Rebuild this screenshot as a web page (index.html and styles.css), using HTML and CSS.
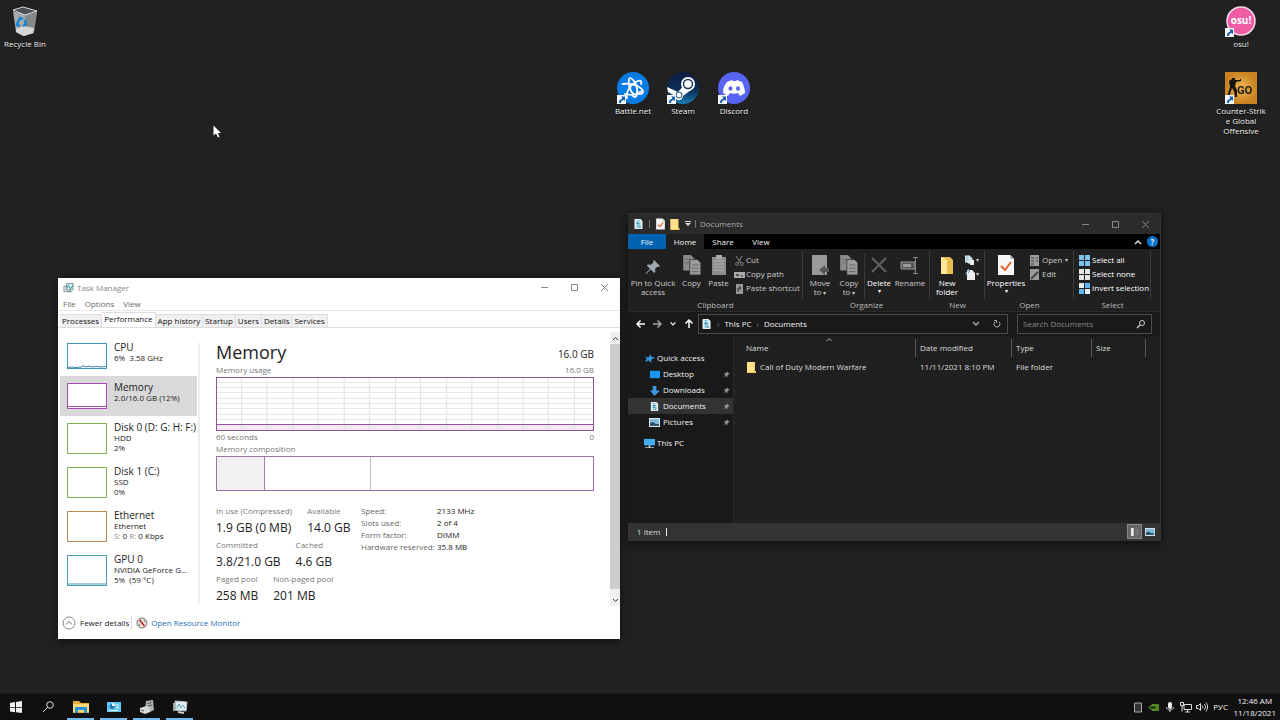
FILE: index.html
```html
<!DOCTYPE html>
<html lang="en">
<head>
<meta charset="utf-8">
<title>Desktop</title>
<link rel="stylesheet" href="styles.css">
</head>
<body>
<svg class="defs" aria-hidden="true">
  <symbol id="shortcut" viewBox="0 0 9 9"><rect width="9" height="9" fill="#f4f7fb"/><path d="M2 8C2 5 3 4 5 4V2h3v4L7 5C5 5 4 6 4 8z" fill="#1b5fb0"/><path d="M4 1.500h3.800v3.800z" fill="#1b5fb0"/></symbol>
  <symbol id="doc" viewBox="0 0 10 12"><path d="M1 1h6l2 2v8H1z" fill="#e8f1f5"/><path d="M3 3h3M3 5h4M3 7h4M3 9h3" stroke="#2e9bc4"/><path d="M3 5h2v1H3zM6 8h1v2H6z" fill="#1c6e91"/></symbol>
  <symbol id="folder" viewBox="0 0 10 12"><path d="M0 1h8v9h1v2H0z" fill="#f5cf60"/><path d="M0 1h7v10H0z" fill="#ffe28a"/></symbol>
  <symbol id="pin" viewBox="0 0 16 16"><path d="M9 1l6 6-1 1-1.500-.5L10 10l.3 3-1 1-3.600-3.600L1 15l-.5-.5L5 9.700 1.800 6.500l1-1 3.200.3 2.600-2.600L8 2z"/></symbol>
  <symbol id="tick" viewBox="0 0 18 22"><path d="M1 1h12l4 4v16H1z" fill="#f7f7f7"/><path d="M13 1v4h4z" fill="#bbb"/><path d="M4 12l4 4 6-8" fill="none" stroke="#e2622b" stroke-width="2"/></symbol>
  <symbol id="picture" viewBox="0 0 11 9"><rect width="11" height="9" fill="#dfe9ef"/><rect x="1" y="1" width="9" height="7" fill="#83bbdc"/><path d="M1 5l3-1 3 2h3v2H1z" fill="#2c5468"/></symbol>
  <symbol id="sheets" viewBox="0 0 18 20"><path d="M1 1h7l3 3v11H1z" fill="#8a8a8a"/><path d="M7 5h7l3 3v11H7z" fill="#9c9c9c" stroke="#333" stroke-width=".7"/><path d="M3 5h4M3 8h3M9 10h6M9 13h6M9 16h6" stroke="#6b6b6b"/></symbol>
  <symbol id="grid" viewBox="0 0 11 11"><path d="M0 0h5v5H0zM6 0h5v5H6zM0 6h5v5H0zM6 6h5v5H6z"/></symbol>
</svg>

<main class="desktop">
  <a class="shortcut bin" href="#"><svg class="art" viewBox="0 0 32 32"><path d="M4 6l12 4 12-3-4 21-10 3-7-4z" fill="#a9acad"/><path d="M16 10l12-3-3 21-10 3z" fill="#85898b"/><path d="M4 5l10-3 14 4-12 4z" fill="#4b5052" stroke="#d7dadb"/><path d="M7 24l8-3 10 2-1 5-9 3-8-4z" fill="#d4d6d7"/><g fill="none" stroke="#1782d2" stroke-width="2.500"><path d="M9 17l2-4 3 1M16 15l1 4-3 2M11 21l-3-1 1-3"/></g></svg><span>Recycle Bin</span></a>
  <a class="shortcut battle" href="#"><svg class="art" viewBox="0 0 32 32"><circle cx="16" cy="16" r="16" fill="#087ce5"/><g fill="none" stroke="#fff" stroke-width="1.800" stroke-linecap="round"><path d="M5.500 12C12 10.500 22 13 25.500 18c1.500 3-1 4.500-4 4"/><path d="M13 6c4 1 8.500 9 7 16-.7 3.500-2.500 4-4.500 1.500"/><path d="M10 26C8 20 15 11 21 9c3-1 4 1 3 3"/><path d="M12 7c-1.500 5 1 12 5 16"/><path d="M8 22c5 1.500 12 .5 17-3"/></g></svg><svg class="arrow"><use href="#shortcut"/></svg><span>Battle.net</span></a>
  <a class="shortcut steam" href="#"><svg class="art" viewBox="0 0 32 32"><defs><linearGradient id="sg" x2="0" y2="1"><stop stop-color="#101b40"/><stop offset=".6" stop-color="#0c315e"/><stop offset="1" stop-color="#1680b4"/></linearGradient></defs><circle cx="16" cy="16" r="16" fill="url(#sg)"/><path d="M0 15l11 5 7-8 6 6-8 6c-1 6-8 5-8 0L1 20z" fill="#fff"/><circle cx="21" cy="12" r="7" fill="#fff"/><circle cx="21" cy="12" r="4.500" fill="#fff" stroke="#18345f" stroke-width="1.500"/><circle cx="12" cy="23" r="3" fill="none" stroke="#18507d"/></svg><svg class="arrow"><use href="#shortcut"/></svg><span>Steam</span></a>
  <a class="shortcut discord" href="#"><svg class="art" viewBox="0 0 32 32"><circle cx="16" cy="16" r="16" fill="#5865f2"/><path d="M9 10l5-2 1 1h3l1-1 5 2c2 4 3 8 3 11l-5 3-2-3c-3 1-5 1-8 0l-2 3-5-3c0-4 1-8 4-11z" fill="#fff"/><ellipse cx="12.500" cy="16.500" rx="2" ry="2.300" fill="#5865f2"/><ellipse cx="20" cy="16.500" rx="2" ry="2.300" fill="#5865f2"/></svg><svg class="arrow"><use href="#shortcut"/></svg><span>Discord</span></a>
  <a class="shortcut osu" href="#"><svg class="art" viewBox="0 0 32 32"><circle cx="16" cy="16" r="14" fill="#ef5da5" stroke="#f6dbe9" stroke-width="1.500"/><text x="16" y="19" text-anchor="middle" class="osu-word">osu!</text></svg><svg class="arrow"><use href="#shortcut"/></svg><span>osu!</span></a>
  <a class="shortcut csgo" href="#"><svg class="art" viewBox="0 0 32 32"><defs><radialGradient id="cg"><stop stop-color="#efb653"/><stop offset="1" stop-color="#c88320"/></radialGradient></defs><rect width="32" height="32" fill="url(#cg)"/><path d="M7 6h3v2h5V7h1v2l-5 1-1 4 2 4v7h-2l-1-6-2-3-3 9H2l3-10-1-6 3-2z" fill="#17150e"/><text x="12" y="22" class="go-word">GO</text></svg><svg class="arrow"><use href="#shortcut"/></svg><span>Counter-Strik<br>e Global<br>Offensive</span></a>

  <section class="window task" aria-label="Task Manager">
    <header class="titlebar">
      <svg class="app" viewBox="0 0 12 12"><path d="M1 4h7v6H1z" fill="#d9e1e3" stroke="#88979c"/><path d="M4 1h7v7H4z" fill="#d8f0f4" stroke="#698b98"/><path d="M4 6l2-3 2 4 3-4" fill="none" stroke="#258c91"/><path d="M5 10h5" stroke="#849092"/></svg>
      <span class="caption">Task Manager</span>
      <div class="controls"><button aria-label="Minimize"><svg viewBox="0 0 9 9"><path d="M1 4.500h7"/></svg></button><button aria-label="Maximize"><svg viewBox="0 0 9 9"><path d="M1.500 1.500h6v6h-6z"/></svg></button><button aria-label="Close"><svg viewBox="0 0 9 9"><path d="M1 1l7 7M8 1L1 8"/></svg></button></div>
    </header>
    <nav class="menu"><button>File</button><button>Options</button><button>View</button></nav>
    <nav class="tabs"><button>Processes</button><button class="current">Performance</button><button>App history</button><button>Startup</button><button>Users</button><button>Details</button><button>Services</button></nav>
    <div class="monitor">
      <aside class="devices">
        <button class="device first"><svg class="spark" viewBox="0 0 40 26"><rect x=".5" y=".5" width="39" height="25" fill="#fff" stroke="#3f93b5"/><path d="M1 24.500l4-.5 4 .5 6-.5 1-1.500 2 1.500 4-.8 3 .8 4-.5 5 .5 5-.5" fill="none" stroke="#3b89ac"/></svg><span><b>CPU</b><i>6%&nbsp; 3.58 GHz</i></span></button>
        <button class="device short active"><svg class="spark" viewBox="0 0 40 26"><rect x=".5" y=".5" width="39" height="25" fill="#fff" stroke="#a24fb0"/><path d="M1 23.500h38" stroke="#a24fb0"/></svg><span><b>Memory</b><i>2.0/16.0 GB (12%)</i></span></button>
        <button class="device"><svg class="spark tall" viewBox="0 0 40 31"><rect x=".5" y=".5" width="39" height="30" fill="#fff" stroke="#7eb456"/></svg><span><b>Disk 0 (D: G: H: F:)</b><i>HDD</i><i>2%</i></span></button>
        <button class="device"><svg class="spark tall" viewBox="0 0 40 31"><rect x=".5" y=".5" width="39" height="30" fill="#fff" stroke="#7eb456"/></svg><span><b>Disk 1 (C:)</b><i>SSD</i><i>0%</i></span></button>
        <button class="device"><svg class="spark tall" viewBox="0 0 40 31"><rect x=".5" y=".5" width="39" height="30" fill="#fff" stroke="#b98a55"/></svg><span><b>Ethernet</b><i>Ethernet</i><i><em>S:</em> 0 <em>R:</em> 0 Kbps</i></span></button>
        <button class="device"><svg class="spark tall" viewBox="0 0 40 31"><rect x=".5" y=".5" width="39" height="30" fill="#fff" stroke="#4e9dba"/><path d="M1 29h38" stroke="#4e9dba"/></svg><span><b>GPU 0</b><i>NVIDIA GeForce G...</i><i>5%&nbsp; (59 °C)</i></span></button>
      </aside>
      <div class="details">
        <div class="heading"><h1>Memory</h1><span>16.0 GB</span></div>
        <div class="pair"><span>Memory usage</span><span>16.0 GB</span></div>
        <svg class="graph" viewBox="0 0 376 54" preserveAspectRatio="none"><rect x="1" y="47" width="374" height="6" fill="#f5e9f7"/><path d="M25.500 1v52M50.500 1v52M76.500 1v52M101.500 1v52M127.500 1v52M152.500 1v52M178.500 1v52M203.500 1v52M229.500 1v52M254.500 1v52M280.500 1v52M305.500 1v52M330.500 1v52M356.500 1v52" stroke="#e0dee2"/><path d="M1 5.500h374M1 10.500h374M1 15.500h374M1 21.500h374M1 26.500h374M1 31.500h374M1 37.500h374M1 42.500h374" stroke="#e8e6ea"/><path d="M.5.5h375v53H.5zM1 47.500h374" fill="none" stroke="#8f5696"/></svg>
        <div class="pair scale"><span>60 seconds</span><span>0</span></div>
        <div class="label">Memory composition</div>
        <div class="composition"><div class="used"></div><div class="standby"></div><div class="free"></div></div>
        <div class="numbers">
          <div class="stats">
            <dl><div><dt>In use (Compressed)</dt><dd>1.9 GB (0 MB)</dd></div><div><dt>Available</dt><dd>14.0 GB</dd></div></dl>
            <dl><div><dt>Committed</dt><dd>3.8/21.0 GB</dd></div><div><dt>Cached</dt><dd>4.6 GB</dd></div></dl>
            <dl><div><dt>Paged pool</dt><dd>258 MB</dd></div><div><dt>Non-paged pool</dt><dd>201 MB</dd></div></dl>
          </div>
          <dl class="hardware"><dt>Speed:</dt><dd>2133 MHz</dd><dt>Slots used:</dt><dd>2 of 4</dd><dt>Form factor:</dt><dd>DIMM</dd><dt>Hardware reserved:</dt><dd>35.8 MB</dd></dl>
        </div>
      </div>
      <div class="scroll"><button aria-label="Scroll up"><svg viewBox="0 0 7 5"><path d="M1 4l2.500-2.500L6 4"/></svg></button><div class="thumb"></div><button aria-label="Scroll down"><svg viewBox="0 0 7 5"><path d="M1 1l2.500 2.500L6 1"/></svg></button></div>
    </div>
    <footer class="links"><button><svg viewBox="0 0 14 14"><circle cx="7" cy="7" r="6" fill="none" stroke="#888"/><path d="M4 8.500l3-3 3 3" fill="none" stroke="#666"/></svg>Fewer details</button><a href="#"><svg viewBox="0 0 14 14"><circle cx="7" cy="7" r="5" fill="#e5e2dc" stroke="#77706b"/><path d="M4.500 4l5 6" stroke="#b32020" stroke-width="1.500"/><path d="M4 8l1 2M9 4l1 2" stroke="#777"/></svg>Open Resource Monitor</a></footer>
  </section>

  <section class="window explorer" aria-label="Documents">
    <header class="titlebar">
      <svg class="app"><use href="#doc"/></svg><span class="bar"></span><svg class="app"><use href="#tick"/></svg><svg class="app"><use href="#folder"/></svg><svg class="drop" viewBox="0 0 6 6"><path d="M0 .5h6" stroke="#ddd"/><path d="M0 2h6L3 5z" fill="#ddd"/></svg><span class="bar"></span>
      <span class="caption">Documents</span>
      <div class="controls"><button aria-label="Minimize"><svg viewBox="0 0 9 9"><path d="M1 4.500h7"/></svg></button><button aria-label="Maximize"><svg viewBox="0 0 9 9"><path d="M1.500 1.500h6v6h-6z"/></svg></button><button aria-label="Close"><svg viewBox="0 0 9 9"><path d="M1 1l7 7M8 1L1 8"/></svg></button></div>
    </header>
    <nav class="ribbon-tabs"><button class="file">File</button><button class="current">Home</button><button>Share</button><button>View</button><span class="grow"></span><button class="mini" aria-label="Collapse ribbon"><svg viewBox="0 0 8 8"><path d="M1 6l3-3 3 3" fill="none" stroke="#ddd" stroke-width="1.500"/></svg></button><button class="mini help" aria-label="Help">?</button></nav>
    <div class="ribbon">
      <div class="group clipboard"><div class="tools">
        <button class="big wide"><svg class="pin-large" fill="#9aa9b3"><use href="#pin"/></svg>Pin to Quick<br>access</button>
        <button class="big"><svg><use href="#sheets"/></svg>Copy</button>
        <button class="big"><svg viewBox="0 0 18 22"><rect x="2" y="3" width="14" height="18" fill="#8d8d8d"/><path d="M6 1h6v4H6z" fill="#aaa"/><path d="M4 7h10M4 10h10M4 13h10M4 16h10" stroke="#b3b3b3"/></svg>Paste</button>
        <div class="lines"><button><svg viewBox="0 0 11 11"><path d="M2 1l5 7M8 1L4 8" stroke="#888"/><circle cx="3" cy="9" r="1.500" fill="none" stroke="#777"/><circle cx="8" cy="9" r="1.500" fill="none" stroke="#777"/></svg>Cut</button><button><svg viewBox="0 0 11 11"><path d="M0 3h11v6H0z" fill="#aaa"/><path d="M2 5l1 2 1-2 1 2M7 7h2" fill="none" stroke="#333"/></svg>Copy path</button><button><svg viewBox="0 0 11 11"><path d="M2 1h7v10H2z" fill="#999"/><path d="M4 9V5h3M5 3l2 2-2 2" fill="none" stroke="#333"/></svg>Paste shortcut</button></div>
      </div><span class="name">Clipboard</span></div>
      <div class="group organize"><div class="tools">
        <button class="big"><svg viewBox="0 0 18 22"><path d="M1 1h15v20H1z" fill="#999"/><path d="M18 14h-4v-3l-6 5 6 5v-3h4z" fill="#575757"/></svg>Move<span>to <small>▾</small></span></button>
        <button class="big divided"><svg><use href="#sheets"/></svg>Copy<span>to <small>▾</small></span></button>
        <button class="big lit"><svg viewBox="0 0 18 22"><path d="M2 4l14 14M16 4L2 18" stroke="#626262" stroke-width="2"/></svg>Delete<small>▾</small></button>
        <button class="big wide"><svg viewBox="0 0 20 20"><path d="M1 7h14v7H1z" fill="#555" stroke="#999"/><path d="M3 9h8v3H3z" fill="#999"/><path d="M15.500 3v15M13 2.500h5M13 18.500h5" stroke="#888"/></svg>Rename</button>
      </div><span class="name">Organize</span></div>
      <div class="group new"><div class="tools"><button class="big lit"><svg viewBox="0 0 18 22"><path d="M3 3h9l3 3v14H3z" fill="#e9bd4e"/><path d="M3 3l6 3v14H3z" fill="#ffe79c"/></svg>New<br>folder</button><div class="lines"><button aria-label="New item"><svg viewBox="0 0 11 11"><path d="M0 1h5v6H0zM3 3h4v5H3z" fill="#9bc9dd" stroke="#eee"/><path d="M5 5h4v5H5z" fill="#eee"/></svg><small>▾</small></button><button aria-label="Easy access"><svg viewBox="0 0 11 11"><path d="M2 1h5l3 3v7H2z" fill="#eee"/><path d="M1 6c0-3 1-4 3-4M3 0l2 2-2 2" fill="none" stroke="#64add9"/></svg><small>▾</small></button></div></div><span class="name">New</span></div>
      <div class="group open"><div class="tools"><button class="big wide lit"><svg><use href="#tick"/></svg>Properties<small>▾</small></button><div class="lines"><button><svg viewBox="0 0 11 11"><path d="M1 0h9v11H1z" fill="#999"/><path d="M2 3h3M2 6h3M2 9h3M7 3h2M7 6h2" stroke="#444"/></svg>Open <small>▾</small></button><button><svg viewBox="0 0 11 11"><path d="M1 0h9v11H1z" fill="#999"/><path d="M2 10l7-7" stroke="#444" stroke-width="2"/></svg>Edit</button></div></div><span class="name">Open</span></div>
      <div class="group select"><div class="tools"><div class="lines lit"><button><svg fill="#79c3ec"><use href="#grid"/></svg>Select all</button><button><svg fill="#e4e4e4"><use href="#grid"/></svg>Select none</button><button><svg viewBox="0 0 11 11"><path d="M0 0h5v5H0zM6 6h5v5H6z" fill="#e4eef5"/><path d="M6 0h5v5H6zM0 6h5v5H0z" fill="#60b7ee"/></svg>Invert selection</button></div></div><span class="name">Select</span></div>
    </div>
    <div class="address">
      <button aria-label="Back"><svg viewBox="0 0 10 10"><path d="M9 5H1M4.500 1.500L1 5l3.500 3.500"/></svg></button><button class="dim" aria-label="Forward"><svg viewBox="0 0 10 10"><path d="M1 5h8M5.500 1.500L9 5 5.500 8.500"/></svg></button><button class="narrow" aria-label="Recent"><svg viewBox="0 0 10 10"><path d="M2 3l3 3 3-3"/></svg></button><button aria-label="Up"><svg viewBox="0 0 10 10"><path d="M5 9V1M1.500 4.500L5 1l3.500 3.500"/></svg></button>
      <div class="path"><svg class="app"><use href="#doc"/></svg><i>›</i><a href="#">This PC</a><i>›</i><a href="#">Documents</a><span class="grow"></span><button class="dim" aria-label="History"><svg viewBox="0 0 10 10"><path d="M2 3l3 3 3-3"/></svg></button><button class="refresh" aria-label="Refresh"><svg viewBox="0 0 10 10"><path d="M3 2.800a3 3 0 1 0 4 0M2 1.500h2.500V4"/></svg></button></div>
      <div class="search"><input type="text" aria-label="Search Documents" placeholder="Search Documents"><svg viewBox="0 0 10 10"><circle cx="6" cy="4" r="2.500" fill="none" stroke="#ccc"/><path d="M4 6L1 9" stroke="#ccc" stroke-width="1.500"/></svg></div>
    </div>
    <div class="browser">
      <nav class="places">
        <a href="#" class="root"><svg viewBox="0 0 12 12"><path d="M7 1l1 3 4 1-4 2v4L5 8l-4 2 2-4-2-2 4 1z" fill="#2d9be7"/></svg>Quick access</a>
        <a href="#"><svg viewBox="0 0 12 12"><path d="M1 2h11v8H1z" fill="#1898f4"/></svg>Desktop<svg class="pinned" fill="#8e9aa0"><use href="#pin"/></svg></a>
        <a href="#"><svg viewBox="0 0 12 12"><path d="M4 1h4v5h4l-6 6-5-6h3z" fill="#3f96df"/></svg>Downloads<svg class="pinned" fill="#8e9aa0"><use href="#pin"/></svg></a>
        <a href="#" class="active"><svg><use href="#doc"/></svg>Documents<svg class="pinned" fill="#8e9aa0"><use href="#pin"/></svg></a>
        <a href="#"><svg><use href="#picture"/></svg>Pictures<svg class="pinned" fill="#8e9aa0"><use href="#pin"/></svg></a>
        <a href="#" class="root pc"><svg viewBox="0 0 12 12"><path d="M0 1h12v7H0z" fill="#43adf0"/><path d="M5 8h2v2h4v1H1v-1h4z" fill="#bdc9ce"/></svg>This PC</a>
      </nav>
      <div class="files"><svg class="sort" viewBox="0 0 6 4"><path d="M.5 3L3 .5 5.500 3" fill="none" stroke="#aaa"/></svg><table><colgroup><col><col class="date"><col class="type"><col class="size"><col class="rest"></colgroup><thead><tr><th><span>Name</span></th><th><span>Date modified</span></th><th><span>Type</span></th><th><span>Size</span></th><td></td></tr></thead><tbody><tr><td><span class="item"><svg><use href="#folder"/></svg>Call of Duty Modern Warfare</span></td><td>11/11/2021 8:10 PM</td><td>File folder</td><td></td><td></td></tr></tbody></table></div>
    </div>
    <footer class="status"><span>1 item</span><span class="caret"></span><span class="grow"></span><button class="on" aria-label="Details view"><svg viewBox="0 0 11 9"><path d="M1 0h3v9H1z" fill="#eee"/><path d="M6 2h4M6 4h4M6 7h4" stroke="#888"/></svg></button><button aria-label="Large icons"><svg><use href="#picture"/></svg></button></footer>
  </section>

  <svg class="pointer" viewBox="0 0 8 13"><path d="M.5.5v10L3 8.500 5 12.500l1.500-.7-1.700-3.800H8z" fill="#fff"/></svg>
</main>

<footer class="taskbar">
  <button class="start" aria-label="Start"><svg viewBox="0 0 12 12"><path d="M0 2l5-1v5H0zM6 1l6-1v6H6zM0 6.800h5v4.400l-5-.7zM6 6.800h6V12l-6-.8z" fill="#eee"/></svg></button>
  <button aria-label="Search"><svg viewBox="0 0 12 12"><circle cx="8" cy="4" r="3.300" fill="none" stroke="#ddd"/><path d="M5.500 6.500L1 11" stroke="#ddd"/></svg></button>
  <button class="running" aria-label="File Explorer"><svg viewBox="0 0 16 14"><path d="M0 1h6l2 2h8v10H0z" fill="#e9ad38"/><path d="M0 4h16v8H0z" fill="#ffda78"/><path d="M2 13V7h12v6h-3v-3H5v3z" fill="#2993d8"/></svg></button>
  <button class="running" aria-label="System"><svg viewBox="0 0 16 14"><path d="M1 2h14v10H1z" fill="#62c4f2"/><circle cx="6" cy="6.500" r="2.500" fill="#207bb8"/><path d="M6 6V3a3 3 0 0 1 3 3z" fill="#f3f7fa"/><path d="M10 5h3M10 7.500h3M3 10.500h9" stroke="#e6faff"/></svg></button>
  <button class="running" aria-label="Device"><svg viewBox="0 0 16 14"><path d="M7 1l7-1 1 10-4 2-5-2z" fill="#aab0b0"/><path d="M1 8l6-2 4 2v4l-5 2-5-2z" fill="#d7d9d8"/><path d="M8.500 3.500l4-1M9 6l4-1" stroke="#4f5858"/><path d="M2 10l3 1" stroke="#555"/></svg></button>
  <button class="running" aria-label="Task Manager"><svg viewBox="0 0 16 14"><path d="M1 3h9v8H1z" fill="#9ba6a8"/><path d="M3 1l12 1-1 9-10-1z" fill="#dceef3" stroke="#b5c2c5"/><path d="M5 8l2-4 2 4 2-3 2 3" fill="none" stroke="#6ba2b5"/><path d="M6 12l6 1" stroke="#ccc" stroke-width="2"/></svg></button>
  <span class="grow"></span>
  <div class="tray"><svg viewBox="0 0 12 12"><path d="M2.500 2h7v9h-7z" fill="#333" stroke="#aaa"/></svg><svg viewBox="0 0 12 12"><path d="M4 3h7v7H4z" fill="#4c8520"/><path d="M1 6.500c2-3 6-3 8 0-2 3-6 3-8 0z" fill="#23400f" stroke="#69a52f"/></svg><svg viewBox="0 0 12 12"><rect x="4" y="1" width="4" height="7" rx="2" fill="#eee"/><path d="M2.500 6c0 4 7 4 7 0M6 9v2" fill="none" stroke="#ccc"/></svg><svg viewBox="0 0 12 12"><path d="M4 3.500h7.500v5H4zM5 11h5M7.500 9v2M.5 1.500h3v3h-3zM2 4.500v6" fill="none" stroke="#ddd"/></svg><svg viewBox="0 0 12 12"><path d="M.5 4.500h2l2-2v7l-2-2h-2zM6 4.500c1 1 1 2 0 3M8 3c2 2 2 4 0 6M10 1.500c2 3 2 6 0 9" fill="none" stroke="#ddd"/></svg></div>
  <button class="lang">РУС</button><button class="clock">12:46 AM<br>11/18/2021</button>
</footer>
</body>
</html>
```
FILE: styles.css
```css
* { box-sizing: border-box; }
body {
  margin: 0;
  min-height: 100vh;
  display: flex;
  flex-direction: column;
  background: #212121;
  color: #f2f2f2;
  font: 8px/10px "Open Sans", "Noto Sans", sans-serif;
}
button, input { font: inherit; color: inherit; background: none; border: 0; padding: 0; margin: 0; }
a { color: inherit; text-decoration: none; }
h1, dl, dd { margin: 0; font-weight: 400; }
b, i, em { font-weight: 400; font-style: normal; }
svg { flex: none; display: block; }
small { font-size: 6px; }
.defs { position: absolute; width: 0; height: 0; }
.grow { flex: 1; }
.desktop { position: relative; flex: 1; min-height: 660px; }

/* desktop shortcuts */
.shortcut { position: absolute; width: 50px; text-align: center; text-shadow: 0 1px 1px #000; }
.shortcut .art { width: 32px; height: 32px; margin: 0 auto 2px; }
.arrow { position: absolute; left: 9px; top: 23px; width: 9px; height: 9px; }
.bin { left: 0; top: 5px; }
.battle { left: 608px; top: 72px; }
.steam { left: 658px; top: 72px; }
.discord { left: 709px; top: 72px; }
.osu { right: 14px; top: 5px; }
.csgo { right: 14px; top: 72px; }
.osu-word { font: 700 10px "Open Sans", sans-serif; fill: #fff; text-shadow: none; }
.go-word { font: 700 11px Roboto, sans-serif; fill: #242017; text-shadow: none; }
.pointer { position: absolute; left: 213px; top: 125px; width: 8px; height: 13px; }

/* window frame */
.window { position: absolute; display: flex; flex-direction: column; }
.titlebar { display: flex; align-items: center; }
.app { width: 11px; height: 12px; }
.controls { margin-left: auto; display: flex; }
.controls button { width: 30px; height: 19px; display: flex; align-items: center; justify-content: center; }
.controls svg { width: 9px; height: 9px; fill: none; stroke: #888; }

/* task manager */
.task { left: 58px; right: 660px; top: 278px; background: #fff; color: #222; box-shadow: 0 2px 8px #0008; }
.task .titlebar { height: 19px; padding: 0 1px 0 5px; gap: 3px; color: #888; }
.menu { display: flex; gap: 9px; height: 14px; padding-left: 5px; color: #666; border-bottom: 1px solid #e8e8e8; }
.tabs { display: flex; align-items: flex-end; height: 17px; padding-left: 2px; border-bottom: 1px solid #ddd; }
.tabs button { height: 13px; padding: 0 2px; background: #f0f0f0; border: 1px solid #ddd; border-width: 1px 1px 0 0; color: #111; }
.tabs .current { height: 15px; padding: 0 2px 3px; background: #fff; }
.monitor { display: flex; padding-top: 4px; }
.devices { width: 142px; margin: 11px 0 2px; padding: 0 1px 0 2px; border-right: 2px solid #eee; }
.device { width: 100%; height: 44px; padding: 7px 0 0 7px; display: flex; gap: 7px; text-align: left; white-space: nowrap; }
.device.first { height: 33px; padding-top: 0; }
.device.short { height: 40px; }
.device.active { background: #d9d9d9; }
.device span, .device b, .device i { display: block; }
.device span { margin-top: -2px; }
.device b { font-size: 10px; line-height: 12px; }
.device em { color: #888; }
.spark { width: 40px; height: 26px; }
.spark.tall { height: 31px; }
.details { flex: 1; min-width: 0; padding: 10px 16px 0; }
.heading { display: flex; justify-content: space-between; align-items: center; height: 22px; }
.heading h1 { font-size: 18px; line-height: 20px; margin-bottom: 2px; }
.heading span { font-size: 10px; margin-top: 2px; }
.pair { display: flex; justify-content: space-between; align-items: center; height: 12px; color: #777; }
.graph { width: 100%; height: 54px; margin-top: 1px; }
.pair.scale { height: 11px; }
.label { color: #777; margin: 2px 0; }
.composition { display: flex; height: 35px; border: 1px solid #a06fac; }
.used { width: 48px; background: #f3f0f4; border-right: 1px solid #a77fae; }
.standby { width: 106px; border-right: 1px solid #c9b8cd; }
.numbers { display: flex; justify-content: flex-start; gap: 8px; padding-top: 15px; white-space: nowrap; }
.stats { display: flex; flex-direction: column; min-width: 137px; }
.stats dl { display: flex; gap: 15px; height: 34px; }
.stats dl:last-child { height: 32px; }
.stats dt { color: #777; }
.stats dd { padding-top: 2px; font-size: 12px; line-height: 20px; }
.hardware { display: grid; grid-template-columns: 76px auto; grid-auto-rows: 12px; }
.hardware dt { color: #666; }
.scroll { width: 10px; background: #f0f0f0; display: flex; flex-direction: column; }
.scroll button { height: 12px; display: flex; align-items: center; justify-content: center; }
.scroll svg { width: 7px; height: 5px; fill: none; stroke: #333; }
.thumb { height: 245px; background: #cdcdcd; }
.scroll button:last-child { margin-top: auto; }
.links { height: 33px; display: flex; align-items: center; padding-left: 4px; }
.links button, .links a { display: flex; align-items: center; gap: 4px; }
.links button { padding-right: 2px; border-right: 1px solid #ddd; }
.links a { padding-left: 3px; gap: 2px; color: #1f6fb5; }
.links svg { width: 14px; height: 14px; }

/* file explorer */
.explorer { left: 628px; right: 119px; top: 213px; background: #202020; border: 1px solid #333; border-width: 1px 1px 1px 0; box-shadow: 0 2px 9px #000a; }
.explorer .titlebar { height: 20px; padding-left: 5px; gap: 4px; background: #2b2b2b; color: #aaa; }
.bar { width: 1px; height: 8px; background: #777; margin: 0 1px; }
.drop { width: 6px; height: 6px; }
.drop + .bar { margin: 0; }
.ribbon-tabs { display: flex; height: 15px; background: #000; }
.ribbon-tabs button { width: 38px; }
.ribbon-tabs .file { background: #0063b1; }
.ribbon-tabs .current { background: #202020; }
.ribbon-tabs .mini { width: 15px; display: flex; align-items: center; justify-content: center; }
.mini svg { width: 8px; height: 8px; }
.ribbon-tabs .help { width: 11px; height: 11px; margin: 2px; border-radius: 50%; background: #0873c9; font-weight: 700; }
.ribbon { display: flex; height: 63px; padding: 2px 0 1px; border-bottom: 1px solid #2b2b2b; }
.group { flex: none; display: flex; flex-direction: column; justify-content: space-between; }
.tools { display: flex; height: 48px; padding-top: 3px; border-right: 1px solid #3b3b3b; }
.name { text-align: center; color: #bbb; }
.clipboard { width: 175px; }
.organize { width: 127px; }
.new { width: 55px; }
.open { width: 89px; }
.select { width: 77px; }
.big { width: 28px; display: flex; flex-direction: column; align-items: center; text-align: center; line-height: 9px; white-space: nowrap; color: #ccc; }
.big.wide { width: 42px; }
.organize .wide { width: 34px; }
.big svg { width: 20px; height: 22px; margin-bottom: 2px; }
.clipboard .big { width: 27px; }
.clipboard .wide { width: 50px; }
.big .pin-large { width: 16px; height: 18px; margin: 4px 0 2px; }
.organize .tools { padding-left: 3px; }
.big.divided { width: 31px; border-right: 1px solid #3b3b3b; }
.big.divided, .big.lit { flex: none; }
.lit, .big.lit { color: #fff; }
.new .big { margin-left: 3px; }
.lines { display: flex; flex-direction: column; margin-top: -1px; }
.clipboard .lines { padding-left: 2px; }
.lines button { display: flex; align-items: center; height: 14px; gap: 2px; white-space: nowrap; color: #ccc; }
.lines.lit button { color: #fff; }
.lines svg { width: 11px; height: 11px; }
.clipboard .lines button { gap: 1px; }
.new .lines { padding-left: 4px; }
.new .lines button { gap: 0; }
.open .lines { padding-left: 2px; }
.select .lines { padding-left: 5px; }
.address { display: flex; align-items: center; height: 24px; padding: 0 8px 0 5px; background: #191919; }
.address button { width: 16px; height: 12px; display: flex; align-items: center; justify-content: center; }
.address button svg { width: 10px; height: 10px; fill: none; stroke: #fff; stroke-width: 1.5; }
.address .refresh svg { stroke: #aaa; stroke-width: 1; }
.address .dim { opacity: .6; }
.address .narrow svg { width: 8px; }
.path { flex: 1; display: flex; align-items: center; height: 20px; gap: 5px; margin-left: 1px; padding: 0 2px; border: 1px solid #4c4c4c; }
.path i { color: #999; }
.search { width: 135px; height: 20px; margin-left: 9px; display: flex; align-items: center; padding: 0 5px; border: 1px solid #4c4c4c; }
.search input { flex: 1; min-width: 0; outline: 0; }
.search input::placeholder { color: #888; }
.search svg { width: 10px; height: 10px; }
.browser { display: flex; min-height: 187px; }
.places { width: 106px; padding-top: 14px; background: #191919; border-right: 1px solid #2b2b2b; }
.places a { height: 16px; display: flex; align-items: center; gap: 3px; padding: 0 3px 0 21px; }
.places .root { padding-left: 16px; gap: 2px; }
.places .pc { margin-top: 5px; }
.places svg { width: 11px; height: 11px; }
.places .pinned { width: 7px; height: 7px; margin-left: auto; }
.places .active { background: #333; }
.files { position: relative; flex: 1; min-width: 0; }
.sort { position: absolute; left: 92px; top: 2px; width: 6px; height: 4px; }
.files table { width: 100%; table-layout: fixed; border-collapse: collapse; }
.date { width: 96px; }
.type { width: 80px; }
.size { width: 54px; }
.rest { width: 14px; }
th, td { padding: 0; text-align: left; font-weight: 400; white-space: nowrap; }
th { height: 23px; color: #ddd; }
th span { display: block; height: 18px; padding: 4px 4px; border-right: 1px solid #555; }
th:first-child span { padding-left: 12px; }
tbody td { height: 15px; padding-left: 4px; color: #ddd; }
tbody td:first-child { padding-left: 13px; }
.item { display: flex; align-items: center; gap: 3px; }
.item svg { width: 10px; height: 12px; }
.status { display: flex; align-items: center; height: 17px; padding: 0 3px 0 9px; background: #333; color: #ddd; }
.caret { width: 1px; height: 8px; margin-left: 6px; background: #eee; }
.status button { width: 15px; height: 15px; display: flex; align-items: center; justify-content: center; }
.status .on { background: #666; border: 1px solid #888; }
.status svg { width: 10px; height: 8px; }

/* taskbar */
.taskbar { display: flex; height: 27px; background: #101010; border-top: 1px solid #191919; padding-right: 4px; }
.taskbar button { width: 33px; display: flex; align-items: center; justify-content: center; }
.taskbar .start { width: 31px; }
.taskbar svg { width: 12px; height: 12px; }
.taskbar .running svg { width: 16px; height: 14px; }
.running { background: linear-gradient(#76b9ed, #76b9ed) center bottom / 27px 2px no-repeat; }
.tray { display: flex; align-items: center; gap: 4px; }
.taskbar .lang { width: 26px; }
.taskbar .clock { width: auto; line-height: 12px; }
```
